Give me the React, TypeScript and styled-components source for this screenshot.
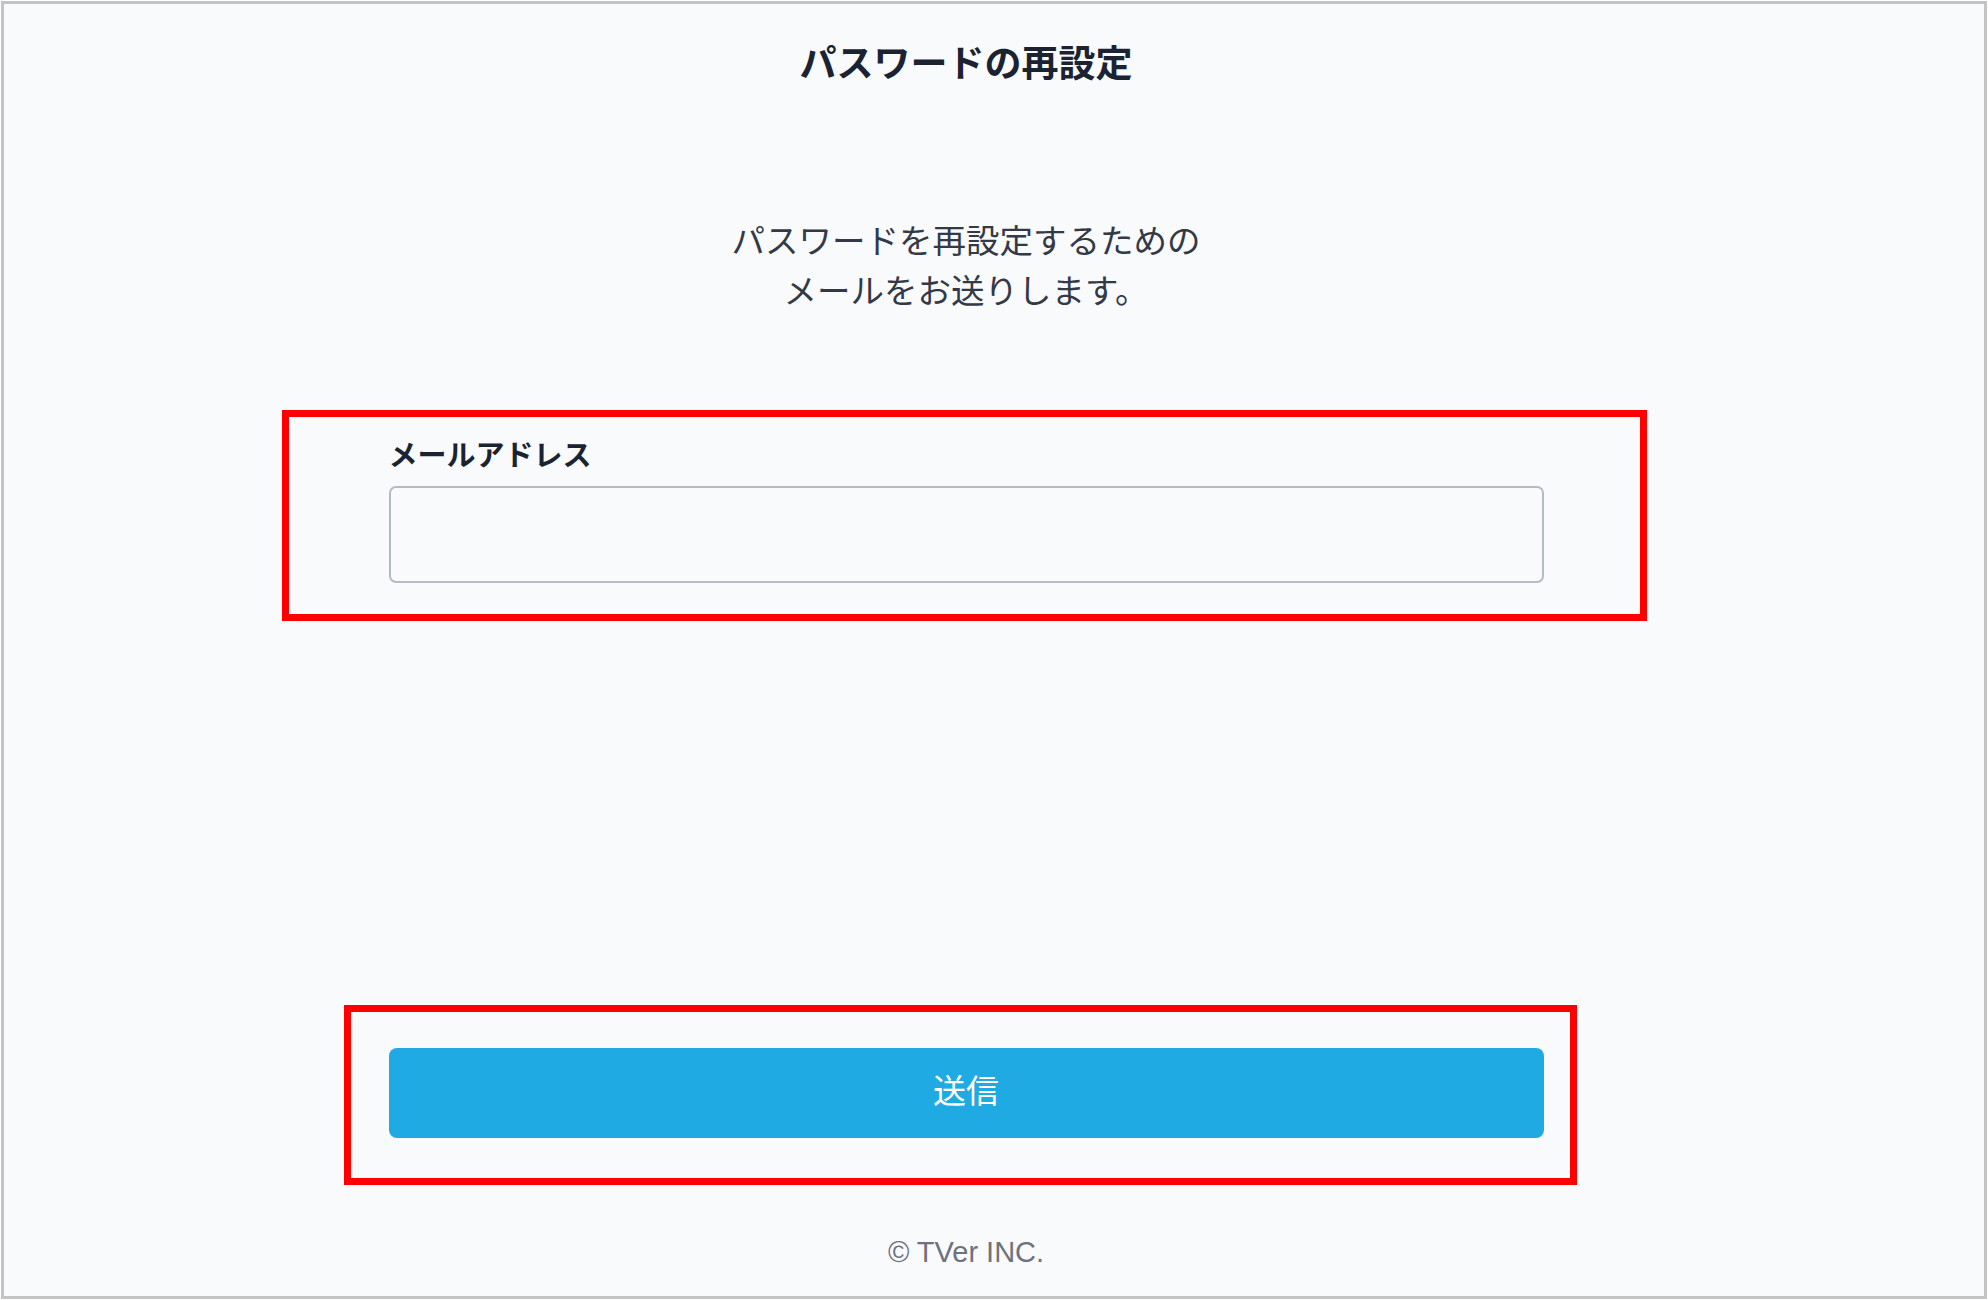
import React from 'react';
import styled, { createGlobalStyle } from 'styled-components';

const GlobalStyle = createGlobalStyle`
  html, body {
    margin: 0;
    padding: 0;
    background: #ffffff;
  }
  * {
    box-sizing: border-box;
  }
`;

const jp = `'Noto Sans CJK JP', 'Noto Sans', sans-serif`;

const Frame = styled.div`
  width: 1988px;
  height: 1300px;
  padding: 1px;
  background: #ffffff;
`;

const Screen = styled.main`
  height: 100%;
  border: 3px solid #c4c4c4;
  background: #f9fafc;
  padding: 29px 56px 0 0;
  display: flex;
  flex-direction: column;
  align-items: center;
  font-family: ${jp};
`;

const Column = styled.div`
  width: 1155px;
  display: flex;
  flex-direction: column;
  align-items: stretch;
`;

const Title = styled.h1`
  margin: 0;
  font-size: 37px;
  line-height: 56px;
  font-weight: 700;
  color: #1b2332;
  text-align: center;
`;

const Lead = styled.p`
  margin: 125px 0 0;
  font-size: 33.5px;
  line-height: 50px;
  font-weight: 400;
  color: #333946;
  text-align: center;
`;

// red annotation frame drawn around a highlighted part of the form
const Highlight = styled.div<{ $mt: number; $ml: number; $mr: number; $pad: string }>`
  margin-top: ${p => p.$mt}px;
  margin-left: ${p => p.$ml}px;
  margin-right: ${p => p.$mr}px;
  padding: ${p => p.$pad};
  border: 7px solid #ff0000;
`;

const Label = styled.label`
  display: block;
  font-size: 29px;
  line-height: 40px;
  font-weight: 700;
  color: #1b2332;
  margin-bottom: 13px;
`;

const Input = styled.input`
  display: block;
  width: 100%;
  height: 97px;
  border: 2px solid #b5bac4;
  border-radius: 7px;
  background: #f9fafc;
  padding: 0 20px;
  font-family: ${jp};
  font-size: 30px;
  outline: none;
`;

const SubmitButton = styled.button`
  display: block;
  width: 100%;
  height: 90px;
  padding: 0 0 8px;
  border: none;
  border-radius: 8px;
  background: #20aae4;
  color: #ffffff;
  font-family: ${jp};
  font-size: 33px;
  font-weight: 400;
  cursor: pointer;
`;

const Footer = styled.footer`
  margin-top: 47px;
  font-family: 'Liberation Sans', Arial, sans-serif;
  font-size: 29px;
  line-height: 40px;
  color: #6e7180;
  text-align: center;
`;

export default function App() {
  return (
    <>
      <GlobalStyle />
      <Frame>
        <Screen>
          <Column>
            <Title>パスワードの再設定</Title>
            <Lead>
              パスワードを再設定するための
              <br />
              メールをお送りします。
            </Lead>
            <Highlight $mt={96} $ml={-107} $mr={-103} $pad="16px 96px 31px 100px">
              <Label htmlFor="email">メールアドレス</Label>
              <Input id="email" type="email" />
            </Highlight>
            <Highlight $mt={384} $ml={-45} $mr={-33} $pad="36px 26px 40px 38px">
              <SubmitButton type="button">送信</SubmitButton>
            </Highlight>
            <Footer>© TVer INC.</Footer>
          </Column>
        </Screen>
      </Frame>
    </>
  );
}
